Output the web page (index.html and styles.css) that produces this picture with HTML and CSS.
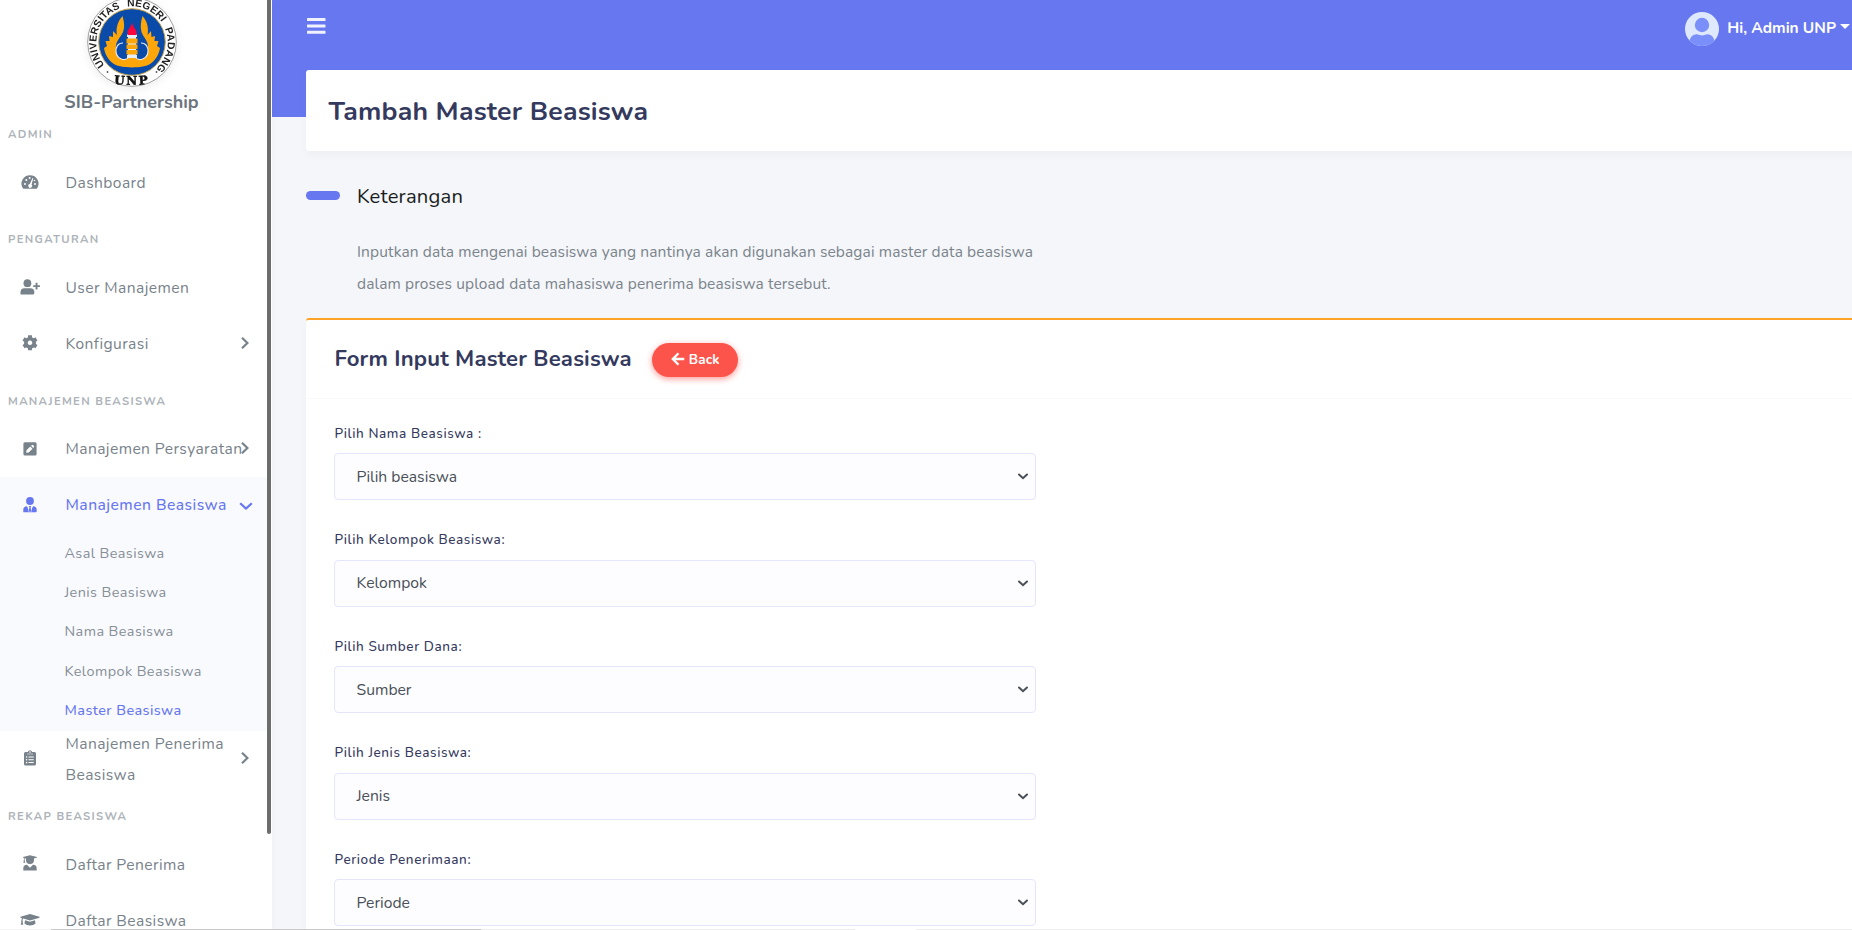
FILE: index.html
```
<!DOCTYPE html>
<html lang="id">
<head>
<meta charset="utf-8">
<title>Tambah Master Beasiswa</title>
<link rel="stylesheet" href="styles.css">
</head>
<body>
<svg width="0" height="0" class="defs">
  <symbol id="chev-r" viewBox="0 0 14 14"><path d="M4 1.800 9.400 7 4 12.200" fill="none" stroke="currentColor" stroke-width="2.200"/></symbol>
  <symbol id="chev-d" viewBox="0 0 14 14"><path d="M1.200 4.200 7 9.600 12.800 4.200" fill="none" stroke="currentColor" stroke-width="2.200"/></symbol>
</svg>
<div class="app">
  <aside class="sidebar">
    <div class="brand">
      <svg class="logo" width="96" height="96" viewBox="0 0 96 96">
        <defs>
          <path id="ring" d="M20.600 71A35.700 35.700 0 1 1 75.400 71L73 74"/>
          <path id="low" d="M24 89Q48 92.500 72 89"/>
        </defs>
        <circle cx="48" cy="48" r="44.300" fill="#fff" stroke="#777" stroke-width=".7"/>
        <circle cx="48" cy="48" r="33.300" fill="#0a4aa8" stroke="#c9a24a" stroke-width="1"/>
        <text class="ring-text"><textPath href="#ring">UNIVERSITAS NEGERI PADANG</textPath></text>
        <circle cx="23.500" cy="78" r=".9" fill="#555"/><circle cx="72.500" cy="78" r=".9" fill="#555"/>
        <text class="unp-text" text-anchor="middle"><textPath href="#low" startOffset="50%">UNP</textPath></text>
        <path fill="#fca60a" d="M38.500 22C40 27 41 33 39 38C37 43 31 47 32 55C34 64 42 66 48 63C54 66 62 64 64 55C65 47 59 43 57.500 38C56 33 57 27 58.500 22C63 27 65 34 63.500 41L67 37L67.500 43L71 42L70.500 47L74.500 47L73 52L76 54C75 60 72 66 66 70C60 74.500 36 74.500 30 70C24 66 21 60 20 54L23 52L21.500 47L25.500 47L25 42L29 43L29 37L33 41C31.500 34 34 27 38.500 22Z"/>
        <path fill="#0a4aa8" d="M36 49 39 40H57L60 49 58 62H38Z"/>
        <path fill="#0a4aa8" stroke="#e8eef5" stroke-width="1.200" d="M39 49C34 49 31.500 53 32 58C33 65 41 68 45 63H51C55 68 63 65 64 58C64.500 53 62 49 57 49"/>
        <path fill="#e8eef5" d="M43 40.500H53V43H43ZM44 43H52V62H44ZM43 61H53V64H43Z"/>
        <path fill="#fca60a" d="M42.500 44.500H53.500V49.500H42.500ZM42.500 50.500H53.500V55H42.500ZM42.500 56H53.500V60.500H42.500Z"/>
        <path fill="#f8053f" d="M44 41C42 35.500 46.500 34.500 48.300 28.500C49 34.500 54 35.500 52.300 41Z"/>
      </svg>
      <div class="brand-name">SIB-Partnership</div>
    </div>
    <div class="heading">ADMIN</div>
    <a class="item"><svg class="ico up" viewBox="0 0 18 18"><path fill="currentColor" d="M9 2.200A8.500 8.500 0 0 0 1.800 15.200L2.500 15.800H15.500L16.200 15.200A8.500 8.500 0 0 0 9 2.200Z"/><g fill="#fff"><circle cx="4" cy="11" r="1"/><circle cx="5.300" cy="7" r="1"/><circle cx="8.600" cy="5" r="1"/><circle cx="14" cy="11" r="1"/><circle cx="13.500" cy="7.500" r=".8"/><path d="M11.500 5 12.300 5.300 10.600 11.500A1.900 1.900 0 1 1 8.800 11Z"/></g></svg><span>Dashboard</span></a>
    <div class="heading">PENGATURAN</div>
    <a class="item"><svg class="ico up" viewBox="0 0 18 18"><g fill="currentColor"><circle cx="6.400" cy="5.200" r="3.900"/><path d="M-.5 16.500V14Q-.5 10.200 3.500 10.200H9.300Q13.300 10.200 13.300 14V15Q13.300 16.500 11.800 16.500Z"/><path d="M14.600 4.800H16.500V7.200H18.900V9.100H16.500V11.500H14.600V9.100H12.200V7.200H14.600Z"/></g></svg><span>User Manajemen</span></a>
    <a class="item"><svg class="ico up" viewBox="0 0 18 18"><path fill="none" stroke="currentColor" stroke-width="3.600" d="M9 4.700A4.100 4.100 0 1 0 9.010 4.700"/><path fill="none" stroke="currentColor" stroke-width="3.900" d="M9 1.300V4M9 13.600V16.300M2.500 5 4.900 6.400M13.100 11.200 15.500 12.600M15.500 5 13.100 6.400M4.900 11.200 2.500 12.600"/></svg><span>Konfigurasi</span><svg class="chev"><use href="#chev-r"/></svg></a>
    <div class="heading">MANAJEMEN BEASISWA</div>
    <a class="item"><svg class="ico" viewBox="0 0 18 18"><rect x="2.400" y="2.300" width="13.200" height="13.200" rx="1.500" fill="currentColor"/><path fill="#fff" d="M5.200 12.800 5.500 10.300 9.300 6.500 11.500 8.700 7.700 12.500ZM10 5.800 11 4.900Q11.500 4.600 12 5L13 6Q13.400 6.500 13 7L12.200 8Z"/></svg><span>Manajemen Persyaratan</span><svg class="chev"><use href="#chev-r"/></svg></a>
    <div class="group">
      <a class="item active"><svg class="ico" viewBox="0 0 18 18"><g fill="currentColor"><circle cx="9" cy="5" r="3.900"/><path d="M2.300 16.300V13.800Q2.300 10.400 6 10.200L9 14.800 12 10.200Q15.700 10.400 15.700 13.800V15.300Q15.700 16.300 14.700 16.300Z"/></g><path fill="#f9fafe" d="M6.400 10H11.600L10.200 16H7.800Z"/><path fill="currentColor" d="M7.900 10H10.100L9.600 11.600 10.300 15 9 16.300 7.700 15 8.400 11.600Z"/></svg><span>Manajemen Beasiswa</span><svg class="chev down"><use href="#chev-d"/></svg></a>
      <a class="sub">Asal Beasiswa</a>
      <a class="sub">Jenis Beasiswa</a>
      <a class="sub">Nama Beasiswa</a>
      <a class="sub">Kelompok Beasiswa</a>
      <a class="sub current">Master Beasiswa</a>
    </div>
    <a class="item"><svg class="ico up" viewBox="0 0 18 18"><path fill="currentColor" d="M5 3H6.800A2.300 2.300 0 0 1 11.200 3H13.500Q15 3 15 4.500V15Q15 16.500 13.500 16.500H4.500Q3 16.500 3 15V4.500Q3 3 4.500 3Z"/><g fill="#fff"><circle cx="9" cy="3" r=".8"/><circle cx="5.600" cy="8" r=".8"/><circle cx="5.600" cy="10.800" r=".8"/><circle cx="5.600" cy="13.600" r=".8"/><path d="M7.500 7.500H12.700V8.500H7.500ZM7.500 10.300H12.700V11.300H7.500ZM7.500 13.100H12.700V14.100H7.500ZM6 4.700H12V5.300H6Z"/></g></svg><span>Manajemen Penerima<br>Beasiswa</span><svg class="chev"><use href="#chev-r"/></svg></a>
    <div class="heading">REKAP BEASISWA</div>
    <a class="item"><svg class="ico up" viewBox="0 0 18 18"><g fill="currentColor"><path d="M2 3 9 1.200 16 3V3.600L13 4.500Q13.500 10 9 10Q4.500 10 5 4.500L3.600 4.200V6L4.300 8.700H2.300L2.900 6V4Q2 3.800 2 3Z"/><path d="M2.300 16.500V14.300Q2.300 11.200 6 10.800L9 13.700 12 10.800Q15.700 11.200 15.700 14.300V16.500Z"/></g></svg><span>Daftar Penerima</span></a>
    <a class="item"><svg class="ico wide" viewBox="0 0 20 18"><g fill="currentColor"><path d="M.5 5.700 10 3 19.500 5.700V6.700L10 9.500 3.300 7.500Q2.600 8 2.500 9.200Q3.200 9.800 2.600 10.700L3.200 13.800H.8L1.400 10.700Q.8 9.800 1.500 9.200Q1.500 8 2.100 7.200L.5 6.700Z"/><path d="M5 9.200 10 10.700 15 9.200 15.500 12.500Q13.500 14.500 10 14.500T4.500 12.500Z"/></g></svg><span>Daftar Beasiswa</span></a>
    <div class="side-thumb"></div>
  </aside>

  <main class="main">
    <header class="navbar">
      <svg width="19" height="18" viewBox="0 0 19 18"><path fill="#f0f2fd" d="M0 1.500Q0 1 .5 1H18Q18.500 1 18.500 1.500V3.500Q18.500 4 18 4H.5Q0 4 0 3.500ZM0 8Q0 7.500 .5 7.500H18Q18.500 7.500 18.500 8V10Q18.500 10.500 18 10.500H.5Q0 10.500 0 10ZM0 14.200Q0 13.700 .5 13.700H18Q18.500 13.700 18.500 14.200V16.200Q18.500 16.700 18 16.700H.5Q0 16.700 0 16.200Z"/></svg>
      <div class="user">
        <svg width="34" height="34" viewBox="0 0 34 34"><defs><clipPath id="av"><circle cx="17" cy="17" r="17"/></clipPath></defs><g clip-path="url(#av)"><rect width="34" height="34" fill="#dfe9fe"/><circle cx="17" cy="13" r="7.200" fill="#7b8ffa"/><path fill="#7b8ffa" d="M4.500 34V29Q6 22 12 22.300Q17 24.500 22 22.300Q28 22 29.500 29V34Z"/></g></svg>
        <span>Hi, Admin UNP</span><i class="caret"></i>
      </div>
    </header>
    <section class="title-box"><h1>Tambah Master Beasiswa</h1></section>
    <h2 class="lead-title">Keterangan</h2>
    <p class="lead">Inputkan data mengenai beasiswa yang nantinya akan digunakan sebagai master data beasiswa<br>dalam proses upload data mahasiswa penerima beasiswa tersebut.</p>
    <section class="card">
      <div class="card-header">
        <h4>Form Input Master Beasiswa</h4>
        <a class="back"><svg width="14" height="14" viewBox="0 0 14 14"><path d="M7.500 1.200 1.800 7 7.500 12.800M2 7H13.300" fill="none" stroke="#fff" stroke-width="2.300"/></svg><span>Back</span></a>
      </div>
      <form class="fields">
        <div class="field"><label>Pilih Nama Beasiswa :</label><div class="select"><span>Pilih beasiswa</span><svg class="arrow" viewBox="0 0 10 7"><path d="M1 1.500 5 5.200 9 1.500"/></svg></div></div>
        <div class="field"><label>Pilih Kelompok Beasiswa:</label><div class="select"><span>Kelompok</span><svg class="arrow" viewBox="0 0 10 7"><path d="M1 1.500 5 5.200 9 1.500"/></svg></div></div>
        <div class="field"><label>Pilih Sumber Dana:</label><div class="select"><span>Sumber</span><svg class="arrow" viewBox="0 0 10 7"><path d="M1 1.500 5 5.200 9 1.500"/></svg></div></div>
        <div class="field"><label>Pilih Jenis Beasiswa:</label><div class="select"><span>Jenis</span><svg class="arrow" viewBox="0 0 10 7"><path d="M1 1.500 5 5.200 9 1.500"/></svg></div></div>
        <div class="field"><label>Periode Penerimaan:</label><div class="select"><span>Periode</span><svg class="arrow" viewBox="0 0 10 7"><path d="M1 1.500 5 5.200 9 1.500"/></svg></div></div>
      </form>
    </section>
  </main>
  <div class="bottom-edge"></div>
</div>
</body>
</html>
```
FILE: styles.css
```
* { box-sizing: border-box; }
body { margin: 0; background: #f4f6f9; font-family: Nunito, Lato, sans-serif; color: #6c757d; }
h1, h2, h4, p { margin: 0; }
.defs { position: absolute; }
.app { display: flex; width: 1852px; height: 930px; overflow: hidden; position: relative; }

.sidebar { position: relative; flex: none; width: 272px; height: 930px; overflow: hidden; background: #fff; box-shadow: 0 4px 9px rgba(0,0,0,.03); z-index: 1; }
.brand { height: 105px; display: flex; flex-direction: column; align-items: center; }
.logo { flex: none; margin: -6px 9px 0 0; filter: drop-shadow(0 2px 4px rgba(0,0,0,.08)); }
.ring-text { font: 700 10.200px "Liberation Sans", sans-serif; letter-spacing: .1px; word-spacing: 4px; fill: #222; }
.unp-text { font: 700 12px "DejaVu Serif", serif; letter-spacing: 1.800px; fill: #111; stroke: #111; stroke-width: .5px; }
.brand-name { font-size: 18px; font-weight: 700; line-height: 24px; margin: 0 9px 0 0; }
.heading { height: 49.300px; padding: 20px 0 0 8px; font-size: 11.300px; font-weight: 700; line-height: 20px; letter-spacing: 1.320px; color: #adb3b9; white-space: nowrap; }
.item { height: 56px; display: flex; align-items: center; position: relative; padding-left: 21px; color: #78828a; font-size: 15.600px; line-height: 31px; letter-spacing: .41px; white-space: nowrap; }
.item span { padding-top: 2px; margin-left: .5px; }
.ico { width: 18px; height: 18px; margin-right: 26px; flex: none; overflow: visible; }
.ico.wide { width: 20px; margin: 0 25px 0 -1px; }
.ico.up { margin-bottom: 1.500px; }
.chev { position: absolute; width: 14px; height: 14px; left: 238px; top: 20px; }
.chev.down { left: 239px; top: 22px; }
.group { background: #f9fafe; height: 254px; width: 267px; }
.active, .sub.current { color: #6777ef; font-weight: 500; }
.active { letter-spacing: .470px; }
.sub { display: block; height: 39.300px; padding: 1px 0 0 64.500px; line-height: 39.300px; font-size: 14.400px; letter-spacing: .43px; color: #868e96; }
.side-thumb { position: absolute; top: -6px; left: 267px; width: 4px; height: 840px; border-radius: 2px; background: #6b6c6c; }

.main { flex: 1; padding-left: 34px; background: linear-gradient(#6777ef 117px, #f4f6f9 117px); overflow: hidden; }
.navbar { height: 70px; display: flex; justify-content: space-between; padding: 0 2px 0 1px; }
.navbar > svg { margin-top: 17px; }
.user { display: flex; align-items: center; height: 58px; color: #fff; font-size: 15.500px; font-weight: 700; }
.user span { margin: -3px 4px 0 8px; }
.caret { border: 5px solid transparent; border-top-color: #fff; border-bottom: 0; margin-top: -6px; }
.title-box { height: 81px; display: flex; align-items: center; margin-right: -10px; padding-left: 22.500px; background: #fff; border-radius: 3px; box-shadow: 0 4px 9px rgba(0,0,0,.03); }
h1 { font-size: 26.600px; font-weight: 700; letter-spacing: .22px; color: #34395e; }
.lead-title { display: flex; align-items: center; height: 28px; margin-top: 31px; font-size: 20.200px; font-weight: 400; letter-spacing: .2px; color: #191d21; }
.lead-title::before { content: ""; width: 34px; height: 9px; margin: -1px 17px 0 0; border-radius: 5px; background: #6777ef; }
.lead { margin: 26px 0 0 51px; font-size: 15.520px; line-height: 32px; letter-spacing: .115px; color: #7b848c; }
.card { height: 650px; margin: 18px -10px 0 0; border-top: 2px solid #ffa426; border-radius: 3px; background: #fff; box-shadow: 0 4px 9px rgba(0,0,0,.03); }
.card-header { height: 79px; display: flex; align-items: center; padding-left: 28.500px; border-bottom: 1px solid #f9f9f9; }
h4 { font-size: 22.100px; font-weight: 700; letter-spacing: .19px; color: #34395e; }
.back { display: flex; align-items: center; justify-content: center; gap: 4px; width: 86px; height: 34px; margin: 2px 0 0 20.500px; border-radius: 17px; background: #fc544b; color: #fff; font-size: 13.500px; font-weight: 700; letter-spacing: .2px; box-shadow: 0 2px 6px #fd9b96; }
.back span { margin-top: -2px; }
.back svg { margin-top: -3px; }
.fields { width: 702px; margin: 24.500px 0 0 28px; }
.field { height: 106.500px; }
label { display: block; height: 29.500px; padding-left: .5px; line-height: 20px; font-size: 13.500px; font-weight: 500; letter-spacing: .6px; color: #34395e; }
.select { display: flex; align-items: center; justify-content: space-between; height: 47px; padding: 0 7px 0 21.500px; border: 1px solid #e4e6fc; border-radius: 4px; background: #fdfdff; color: #495057; font-size: 15.700px; }
.arrow { width: 10px; height: 7px; fill: none; stroke: #495057; stroke-width: 2; stroke-linecap: round; }
.bottom-edge { position: absolute; z-index: 2; left: 0; top: 929px; width: 1852px; height: 1px; background: linear-gradient(90deg, #f2f2f2 51px, #c9c9c9 51px 481px, #eee 481px 855px, #fff 855px 916px, #eee 916px); }
```
